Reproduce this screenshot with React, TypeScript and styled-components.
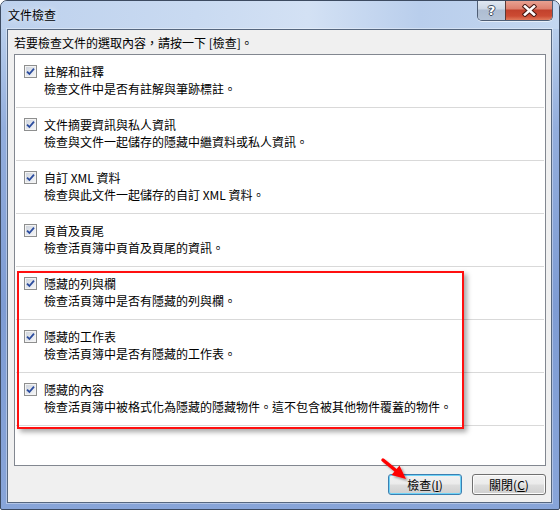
import React from "react";
import styled, { createGlobalStyle } from "styled-components";

const GlobalStyle = createGlobalStyle`
  html, body { margin: 0; padding: 0; background: #ffffff; }
  body {
    font-family: "Noto Sans CJK TC", "Noto Sans CJK SC", sans-serif;
    font-size: 12px;
    color: #000;
  }
`;

const Window = styled.div`
  position: relative;
  width: 560px;
  height: 510px;
  box-sizing: border-box;
  border: 1px solid #3d4b61;
  border-radius: 7px 7px 2px 2px;
  background: linear-gradient(180deg, #c3d6ef 0%, #b7cdeb 6%, #93aedd 25%, #7e9cd4 60%, #88a5d9 100%);
  display: flex;
  flex-direction: column;
  overflow: hidden;
`;

const TitleBar = styled.div`
  height: 28px;
  flex: none;
  display: flex;
  align-items: center;
  justify-content: space-between;
  padding: 0 6px 0 7px;
  background: linear-gradient(90deg, #bdd1ed 0%, #c9daf1 35%, #d3e1f4 55%, #b9ceec 75%, #c4d7f0 100%);
`;

const Title = styled.span`
  font-size: 12px;
  line-height: 16px;
  color: #000;
  text-shadow: 0 0 6px rgba(255, 255, 255, 0.9);
`;

const CaptionButtons = styled.div`
  align-self: flex-start;
  margin-top: -1px;
  display: flex;
  border: 1px solid #4f5e75;
  border-top: none;
  border-radius: 0 0 5px 5px;
  overflow: hidden;
  box-shadow: 0 1px 0 rgba(255, 255, 255, 0.6);
`;

const CaptionButton = styled.div<{ $close?: boolean }>`
  width: ${(p) => (p.$close ? "47px" : "27px")};
  height: 20px;
  display: flex;
  align-items: center;
  justify-content: center;
  box-sizing: border-box;
  border-left: ${(p) => (p.$close ? "1px solid #5a3a36" : "none")};
  background: ${(p) =>
    p.$close
      ? "linear-gradient(180deg, #e9a596 0%, #dd7f6d 45%, #c2412c 50%, #cc4b33 80%, #e07a5c 100%)"
      : "linear-gradient(180deg, #e3eaf3 0%, #cdd8e6 45%, #aebdd2 50%, #b5c4d8 100%)"};
`;

const HelpGlyph = styled.span`
  font-family: "DejaVu Sans", sans-serif;
  font-weight: bold;
  font-size: 13px;
  line-height: 13px;
  color: #ffffff;
  text-shadow: 1px 0 0 #3f4b5e, -1px 0 0 #3f4b5e, 0 1px 0 #3f4b5e, 0 -1px 0 #3f4b5e;
`;

const ClientFrame = styled.div`
  flex: 1;
  margin: 0 7px 6px 6px;
  border: 1px solid #56677f;
  outline: 1px solid rgba(255, 255, 255, 0.35);
  background: #f0f0f0;
  display: flex;
  flex-direction: column;
  padding: 5px 5px 7px 6px;
  min-height: 0;
`;

const Instruction = styled.div`
  line-height: 16px;
  height: 16px;
  margin-bottom: 3px;
`;

const List = styled.div`
  position: relative;
  height: 412px;
  box-sizing: border-box;
  border: 1px solid #828790;
  background: #ffffff;
  display: flex;
  flex-direction: column;
`;

const Item = styled.div`
  margin: 0 1px;
  border-bottom: 1px solid #d9d9d9;
  display: grid;
  grid-template-columns: 13px 1fr;
  column-gap: 7px;
  padding: 8px 0 0 8px;
  box-sizing: content-box;
  height: 44px;
`;

const Check = styled.span`
  width: 13px;
  height: 13px;
  margin-top: 2px;
  box-sizing: border-box;
  border: 1px solid #8e8f8f;
  background: linear-gradient(135deg, #cbd1da 0%, #e6e9ee 60%, #f8f8f8 100%);
  box-shadow: inset 0 0 0 1px #f3f3f3;
  display: flex;
  align-items: center;
  justify-content: center;
`;

const Texts = styled.div`
  display: flex;
  flex-direction: column;
`;

const ItemTitle = styled.div`
  line-height: 17px;
`;

const ItemDesc = styled.div`
  line-height: 17px;
`;

const Highlight = styled.div`
  position: absolute;
  left: 2px;
  top: 216px;
  width: 447px;
  height: 158px;
  box-sizing: border-box;
  border: 2px solid #ff0f0f;
  box-shadow: 3px 3px 5px rgba(0, 0, 0, 0.35);
  pointer-events: none;
`;

const ButtonRow = styled.div`
  margin-top: 8px;
  display: flex;
  justify-content: flex-end;
  gap: 10px;
`;

const Button = styled.div<{ $default?: boolean }>`
  width: 74px;
  height: 21px;
  box-sizing: border-box;
  border-radius: 3px;
  border: 1px solid ${(p) => (p.$default ? "#3c7fb1" : "#707070")};
  box-shadow: ${(p) => (p.$default ? "inset 0 0 0 1px #6fd3f7" : "inset 0 0 0 1px #fcfcfc")};
  background: linear-gradient(180deg, #f2f2f2 0%, #ebebeb 48%, #dddddd 52%, #cfcfcf 100%);
  display: flex;
  align-items: center;
  justify-content: center;
  line-height: 15px;
  color: #000;
`;

const Mnemonic = styled.span`
  text-decoration: underline;
`;

const Arrow = styled.svg`
  position: absolute;
  left: 374px;
  top: 451px;
  overflow: visible;
  pointer-events: none;
`;

const items = [
  ["註解和註釋", "檢查文件中是否有註解與筆跡標註。"],
  ["文件摘要資訊與私人資訊", "檢查與文件一起儲存的隱藏中繼資料或私人資訊。"],
  ["自訂 XML 資料", "檢查與此文件一起儲存的自訂 XML 資料。"],
  ["頁首及頁尾", "檢查活頁簿中頁首及頁尾的資訊。"],
  ["隱藏的列與欄", "檢查活頁簿中是否有隱藏的列與欄。"],
  ["隱藏的工作表", "檢查活頁簿中是否有隱藏的工作表。"],
  ["隱藏的內容", "檢查活頁簿中被格式化為隱藏的隱藏物件。這不包含被其他物件覆蓋的物件。"],
];

const CheckMark = () => (
  <svg width="9" height="9" viewBox="0 0 9 9">
    <path d="M1 4.6 L3.4 7 L8 1.6" fill="none" stroke="#2b4c9e" strokeWidth="1.8" />
  </svg>
);

export default function App() {
  return (
    <>
      <GlobalStyle />
      <Window>
        <TitleBar>
          <Title>文件檢查</Title>
          <CaptionButtons>
            <CaptionButton>
              <HelpGlyph>?</HelpGlyph>
            </CaptionButton>
            <CaptionButton $close>
              <svg width="15" height="13" viewBox="0 0 15 13">
                <path d="M3 2.5 L12 10.5 M12 2.5 L3 10.5" stroke="#4a1a14" strokeWidth="4.6" strokeLinecap="square" />
                <path d="M3 2.5 L12 10.5 M12 2.5 L3 10.5" stroke="#ffffff" strokeWidth="2.6" strokeLinecap="square" />
              </svg>
            </CaptionButton>
          </CaptionButtons>
        </TitleBar>
        <ClientFrame>
          <Instruction>若要檢查文件的選取內容，請按一下 [檢查]。</Instruction>
          <List>
            {items.map(([t, d]) => (
              <Item key={t}>
                <Check>
                  <CheckMark />
                </Check>
                <Texts>
                  <ItemTitle>{t}</ItemTitle>
                  <ItemDesc>{d}</ItemDesc>
                </Texts>
              </Item>
            ))}
            <Highlight />
          </List>
          <ButtonRow>
            <Button $default>
              檢查(<Mnemonic>I</Mnemonic>)
            </Button>
            <Button>
              關閉(<Mnemonic>C</Mnemonic>)
            </Button>
          </ButtonRow>
        </ClientFrame>
        <Arrow width="40" height="32" viewBox="0 0 40 32">
          <defs>
            <filter id="arrowShadow" x="-30%" y="-30%" width="160%" height="160%">
              <feDropShadow dx="2" dy="2" stdDeviation="1.2" floodColor="#000" floodOpacity="0.35" />
            </filter>
          </defs>
          <g filter="url(#arrowShadow)">
            <path d="M8 8 L22 19.5" stroke="#ff0000" strokeWidth="3.5" strokeLinecap="round" />
            <path d="M31 27 L16.5 23 L24.5 13.5 Z" fill="#ff0000" />
          </g>
        </Arrow>
      </Window>
    </>
  );
}
